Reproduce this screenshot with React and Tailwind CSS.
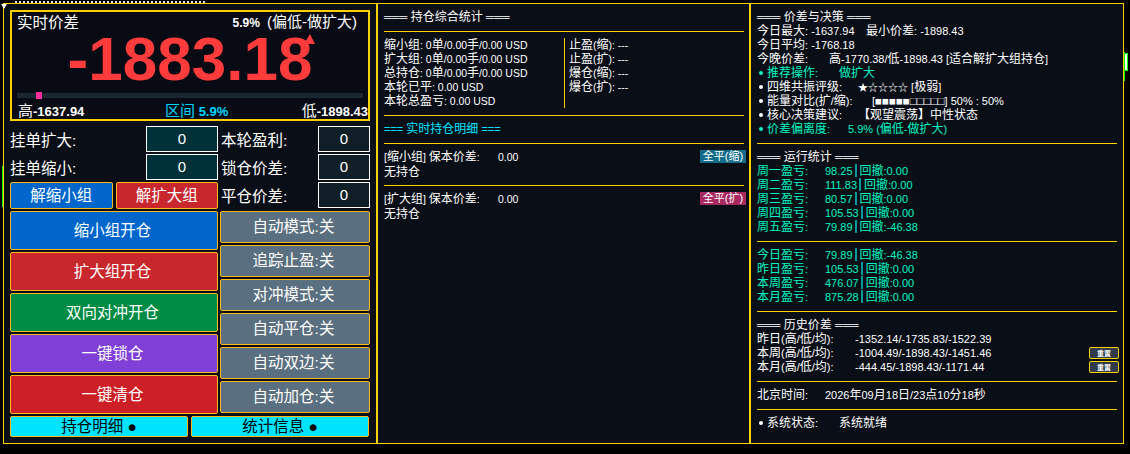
import { Children } from "react";

const cjk = "font-['Liberation_Sans','Noto_Sans_CJK_SC',sans-serif]";

const m = (s) =>
  s.split(/([\u2E80-\u9FFF\u3000-\u303F\uFF00-\uFFEF]+)/).map((p, i) =>
    i % 2 ? (
      <span key={i} className="text-[12px]">
        {p}
      </span>
    ) : (
      p
    )
  );

const mixAll = (children) =>
  Children.toArray(children).map((c) => (typeof c === "string" ? m(c) : c));

const Field = ({ label, wide }) => (
  <div className="flex items-center h-[28px]">
    <span className={`${wide ? "w-[136px]" : "w-[98px] pl-[1px]"} pt-[4px] text-[15.5px] text-white`}>{label}:</span>
    <div className={`${wide ? "w-[72px] bg-[#003038]" : "w-[52px] bg-[#101e28]"} h-[26px] border border-white text-center text-[15px] leading-[24px] text-white`}>0</div>
  </div>
);

const MainBtn = ({ bg, children }) => (
  <button className={`h-[39px] shrink-0 border border-[#ffb81c] rounded-[2px] pr-[3px] ${bg} text-[15.5px] text-white`}>{children}</button>
);

const ToggleBtn = ({ children }) => (
  <button className="h-[32px] shrink-0 border border-[#ffb81c] rounded-[2px] pr-[3px] bg-[#5a6f7f] text-[15.5px] text-white">{children}</button>
);

const Heading = ({ children, className = "" }) => (
  <div className={`text-[12px] leading-[14px] text-white whitespace-nowrap ${className}`}>
    <span className="text-[11px]">═══</span> {children} <span className="text-[11px]">═══</span>
  </div>
);

const Rule = ({ className = "" }) => <div className={`h-[1px] bg-[#ffd000] ${className}`} />;

const Row = ({ c = "text-white", small, tall, children }) => (
  <div className={`${tall ? "h-[15px] leading-[15px]" : "h-[14px] leading-[14px]"} ${small ? "text-[10.5px]" : "text-[11px]"} whitespace-nowrap ${c}`}>
    {mixAll(children)}
  </div>
);

const L = ({ w, children }) => <span className={`inline-block ${w}`}>{m(children)}</span>;

const Dot = ({ c }) => <span className={`inline-block w-[4px] h-[4px] rounded-full mr-[4px] ml-[2px] mb-[2px] ${c}`} />;

const Stat = ({ a, b, d }) => (
  <div className="flex h-[14px] text-[11px] leading-[14px] text-[#00f5c0] whitespace-nowrap">
    <span className="w-[68px]">{m(a + ":")}</span>
    <span>{b}</span>
    <span className="inline-block w-[2px] h-[13px] mx-[2px] bg-[#009a9a]" />
    <span className="ml-[1px]">{m("回撤:" + d)}</span>
  </div>
);

const Hist = ({ a, b, btn }) => (
  <div className="flex items-center h-[14px] text-[11px] leading-[14px] text-white whitespace-nowrap">
    <span className="w-[98px]">{m(a + ":")}</span>
    <span>{b}</span>
    {btn && (
      <span className="ml-auto mr-[-2px] flex h-[12px] w-[30px] items-center justify-center border border-[#ffd000] rounded-[2px] bg-[#303a48] text-[7px] font-bold leading-none text-white">
        重置
      </span>
    )}
  </div>
);

export default function App() {
  return (
    <div className={`relative w-[1130px] h-[454px] bg-black overflow-hidden pt-[3px] pl-[3px] ${cjk}`}>
      {/* clipped window chrome */}
      <div className="absolute left-[15px] top-[1px] w-[190px] border-t-2 border-dotted border-[#d8e0f0]" />
      <div className="absolute left-[1px] top-[4px] h-0 w-0 border-x-[3px] border-t-[5px] border-x-transparent border-t-white" />
      <div className="absolute left-[2px] top-[166px] h-[41px] w-[1px] bg-[#00ff00]" />
      <div className="absolute left-[1124px] top-[52px] h-[29px] w-[1px] bg-[#00ff00]" />
      <div className="absolute left-[1125px] top-[53px] h-[18px] w-[3px] bg-white border-r border-t border-b border-[#00ff00]" />

      <div className="flex w-[1121px] h-[441px] bg-[#0a0e17]">
        {/* left */}
        <div className="w-[375px] shrink-0 border border-[#ffd000] border-r-2 px-[6px] pt-[6px]">
          <div className="h-[111px] border-2 border-[#ffd000] bg-[#080b13] px-[5px] pt-[1px]">
            <div className="flex justify-between items-center h-[19px]">
              <span className="text-[15.5px] text-white">实时价差</span>
              <span className="text-[15px] text-white mr-[6px]">
                <span className="text-[12px] font-bold mr-[3px]">5.9%</span> (偏低-做扩大)
              </span>
            </div>
            <div className="relative h-[60px] text-center text-[62px] leading-[54px] font-bold text-[#ff3b3b] whitespace-nowrap">
              -1883.18
              <span className="absolute left-[287px] top-[2px] h-0 w-0 border-b-[10px] border-l-[6px] border-r-[5px] border-b-[#ff3b3b] border-x-transparent" />
            </div>
            <div className="relative h-[5px] mt-[1px] bg-[#1a2630]">
              <span className="absolute left-[19px] top-[-1px] h-[7px] w-[6px] bg-[#ff2c9c]" />
            </div>
            <div className="relative flex justify-between items-center h-[18px] mt-[4px] text-[13px] font-bold text-white mr-[-5px]">
              <span className="ml-[1px]"><span className="font-normal text-[15px]">高</span>-1637.94</span>
              <span className="absolute left-[148px] text-[#00d4ff]"><span className="font-normal text-[15px]">区间</span> 5.9%</span>
              <span><span className="font-normal text-[15px]">低</span>-1898.43</span>
            </div>
          </div>
          <div className="flex gap-[2px] mt-[4px]">
            <div className="w-[208px] shrink-0 flex flex-col">
              <Field wide label="挂单扩大" />
              <Field wide label="挂单缩小" />
              <div className="flex gap-[3px] h-[27px] mt-[1px]">
                <button className="flex-1 border border-[#ffb81c] rounded-[2px] bg-[#0066cc] text-[15.5px] text-white">解缩小组</button>
                <button className="flex-1 border border-[#ffb81c] rounded-[2px] bg-[#c8282d] text-[15.5px] text-white">解扩大组</button>
              </div>
              <div className="flex flex-col gap-[2px] mt-[2px]">
                <MainBtn bg="bg-[#0066cc]">缩小组开仓</MainBtn>
                <MainBtn bg="bg-[#c8282d]">扩大组开仓</MainBtn>
                <MainBtn bg="bg-[#008c44]">双向对冲开仓</MainBtn>
                <MainBtn bg="bg-[#8040d8]">一键锁仓</MainBtn>
                <MainBtn bg="bg-[#cc2026]">一键清仓</MainBtn>
              </div>
            </div>
            <div className="w-[150px] shrink-0 flex flex-col">
              <Field label="本轮盈利" />
              <Field label="锁仓价差" />
              <Field label="平仓价差" />
              <div className="flex flex-col gap-[2px] mt-[2px]">
                <ToggleBtn>自动模式:关</ToggleBtn>
                <ToggleBtn>追踪止盈:关</ToggleBtn>
                <ToggleBtn>对冲模式:关</ToggleBtn>
                <ToggleBtn>自动平仓:关</ToggleBtn>
                <ToggleBtn>自动双边:关</ToggleBtn>
                <ToggleBtn>自动加仓:关</ToggleBtn>
              </div>
            </div>
          </div>
          <div className="flex gap-[3px] mt-[2px]">
            <button className="w-[178px] h-[21px] border border-[#ffb81c] rounded-[2px] bg-[#00e5ff] text-[15.5px] leading-[18px] text-black">持仓明细 ●</button>
            <button className="w-[178px] h-[21px] border border-[#ffb81c] rounded-[2px] bg-[#00e5ff] text-[15.5px] leading-[18px] text-black">统计信息 ●</button>
          </div>
        </div>

        {/* middle */}
        <div className="w-[373px] shrink-0 border-t border-b border-[#ffd000] border-r-2 pl-[6px] pr-[6px] pt-[6px]">
          <Heading>持仓综合统计</Heading>
          <Rule className="mt-[7px] mr-[-1px]" />
          <div className="flex mt-[6px]">
            <div className="w-[180px] h-[70px]">
              <Row small>缩小组: 0单/0.00手/0.00 USD</Row>
              <Row small>扩大组: 0单/0.00手/0.00 USD</Row>
              <Row small>总持仓: 0单/0.00手/0.00 USD</Row>
              <Row small>本轮已平: 0.00 USD</Row>
              <Row small>本轮总盈亏: 0.00 USD</Row>
            </div>
            <div className="border-l border-[#ffd000] h-[70px] pl-[4px]">
              <Row small>止盈(缩): ---</Row>
              <Row small>止盈(扩): ---</Row>
              <Row small>爆仓(缩): ---</Row>
              <Row small>爆仓(扩): ---</Row>
            </div>
          </div>
          <Rule className="mt-[7px] mr-[-1px]" />
          <div className="mt-[6px] text-[11px] leading-[14px] text-[#00e5ff]">=== {m("实时持仓明细")} ===</div>
          <Rule className="mt-[7px] mr-[-1px]" />
          <div className="relative mt-[6px]">
            <Row small tall><L w="w-[114px]">[缩小组] 保本价差:</L>0.00</Row>
            <Row small tall>无持仓</Row>
            <span className="absolute right-[-3px] top-[0px] h-[13px] w-[46px] bg-[#146c88] text-[11px] leading-[12px] text-center text-white whitespace-nowrap">全平(缩)</span>
          </div>
          <Rule className="mt-[5px] mr-[-1px]" />
          <div className="relative mt-[6px]">
            <Row small tall><L w="w-[114px]">[扩大组] 保本价差:</L>0.00</Row>
            <Row small tall>无持仓</Row>
            <span className="absolute right-[-3px] top-[0px] h-[13px] w-[46px] bg-[#a82860] text-[11px] leading-[12px] text-center text-white whitespace-nowrap">全平(扩)</span>
          </div>
        </div>

        {/* right */}
        <div className="w-[373px] shrink-0 border-t border-b border-r border-[#ffd000] pl-[6px] pr-[6px] pt-[6px]">
          <Heading>价差与决策</Heading>
          <Row><L w="w-[109px]">今日最大: -1637.94</L>最小价差: -1898.43</Row>
          <Row>今日平均: -1768.18</Row>
          <Row><L w="w-[72px]">今晚价差:</L>高-1770.38/低-1898.43 [适合解扩大组持仓]</Row>
          <Row c="text-[#00f5c0]"><Dot c="bg-[#00f5c0]" /><L w="w-[72px]">推荐操作:</L>做扩大</Row>
          <Row><Dot c="bg-white" /><L w="w-[91px]">四维共振评级:</L><span className="text-[10px]">★☆☆☆☆</span> [极弱]</Row>
          <Row><Dot c="bg-white" /><L w="w-[105px]">能量对比(扩/缩):</L>[<span className="text-[11.5px]">■■■■■□□□□□</span>] 50% : 50%</Row>
          <Row><Dot c="bg-white" /><L w="w-[91px]">核心决策建议:</L>【观望震荡】中性状态</Row>
          <Row c="text-[#00f5c0]"><Dot c="bg-[#00f5c0]" /><L w="w-[81px]">价差偏离度:</L>5.9% (偏低-做扩大)</Row>
          <Rule className="mt-[7px]" />
          <Heading className="mt-[6px]">运行统计</Heading>
          <Stat a="周一盈亏" b="98.25" d="0.00" />
          <Stat a="周二盈亏" b="111.83" d="0.00" />
          <Stat a="周三盈亏" b="80.57" d="0.00" />
          <Stat a="周四盈亏" b="105.53" d="0.00" />
          <Stat a="周五盈亏" b="79.89" d="-46.38" />
          <Rule className="mt-[7px]" />
          <div className="mt-[6px]">
            <Stat a="今日盈亏" b="79.89" d="-46.38" />
            <Stat a="昨日盈亏" b="105.53" d="0.00" />
            <Stat a="本周盈亏" b="476.07" d="0.00" />
            <Stat a="本月盈亏" b="875.28" d="0.00" />
          </div>
          <Rule className="mt-[7px]" />
          <Heading className="mt-[6px]">历史价差</Heading>
          <Hist a="昨日(高/低/均)" b="-1352.14/-1735.83/-1522.39" />
          <Hist a="本周(高/低/均)" b="-1004.49/-1898.43/-1451.46" btn />
          <Hist a="本月(高/低/均)" b="-444.45/-1898.43/-1171.44" btn />
          <Rule className="mt-[7px]" />
          <div className="flex h-[14px] mt-[6px] text-[11px] leading-[14px] text-white whitespace-nowrap">
            <span className="w-[68px]">{m("北京时间:")}</span>
            <span>{m("2026年09月18日/23点10分18秒")}</span>
          </div>
          <Rule className="mt-[7px]" />
          <Row c="text-white mt-[6px]"><Dot c="bg-white" /><L w="w-[72px]">系统状态:</L>系统就绪</Row>
        </div>
      </div>
    </div>
  );
}
